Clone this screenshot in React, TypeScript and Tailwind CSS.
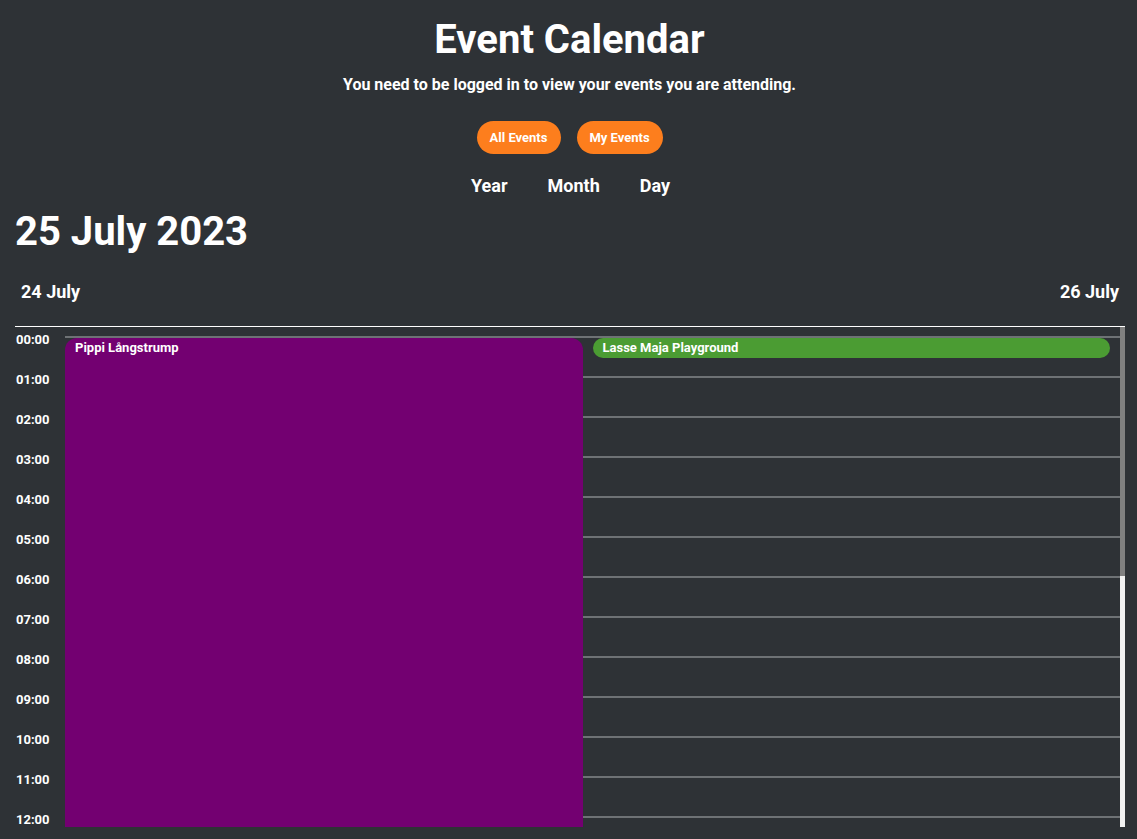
import React from "react";

// only the hours that are visible in the scroll window
const HOURS = Array.from({ length: 13 }, (_, i) => `${String(i).padStart(2, "0")}:00`);

interface CalEvent {
  title: string;
  column: number;
  top: number;
  height: number;
  color: string;
  rounded: string;
}

const EVENTS: CalEvent[] = [
  {
    title: "Pippi Långstrump",
    column: 0,
    top: 2,
    height: 520,
    color: "bg-[#730071]",
    rounded: "rounded-t-[12px]",
  },
  {
    title: "Lasse Maja Playground",
    column: 1,
    top: 2,
    height: 20,
    color: "bg-[#4b9c33]",
    rounded: "rounded-full",
  },
];

const App: React.FC = () => {
  return (
    <div className="min-h-[839px] w-full bg-[#2e3236] text-white font-['Roboto','Liberation_Sans',sans-serif] overflow-hidden">
      <h1 className="mt-4 pl-[2px] text-center text-[40px] leading-[48px] font-bold">Event Calendar</h1>
      <p className="mt-[11px] pl-[2px] text-center text-[16px] leading-5 font-bold">
        You need to be logged in to view your events you are attending.
      </p>

      <div className="mt-[26px] pl-[2px] flex justify-center gap-4">
        <button className="h-[33px] w-[84px] rounded-full bg-[#fd7e1d] text-[13px] font-bold text-white">
          All Events
        </button>
        <button className="h-[33px] w-[86px] rounded-full bg-[#fd7e1d] text-[13px] font-bold text-white">
          My Events
        </button>
      </div>

      <div className="mt-5 pl-[4px] flex justify-center gap-10 text-[18px] leading-6 font-bold">
        <span>Year</span>
        <span>Month</span>
        <span>Day</span>
      </div>

      <h2 className="mt-[10px] pl-[15px] text-[40px] leading-[48px] font-bold">25 July 2023</h2>

      <div className="ml-[15px] w-[1110px]">
        <div className="mt-6 flex justify-between px-[6px] text-[18px] leading-6 font-bold">
          <span>24 July</span>
          <span>26 July</span>
        </div>

        <div className="mt-[22px] border-t border-white flex h-[501px]">
          <div className="flex-1 h-[500px] overflow-hidden flex">
            {/* time labels */}
            <div className="w-[50px] shrink-0 pt-[5px] pl-px">
              {HOURS.map((h) => (
                <div key={h} className="h-10 text-[13px] leading-4 font-bold">
                  {h}
                </div>
              ))}
            </div>
            {/* day grid */}
            <div className="relative flex-1 pt-[9px]">
              {HOURS.map((h) => (
                <div key={h} className="h-10 border-t-2 border-[#6e7275]" />
              ))}
              {EVENTS.map((ev) => (
                <div
                  key={ev.title}
                  className={`absolute px-[10px] pt-[3px] text-[13px] leading-[14px] font-bold ${ev.color} ${ev.rounded}`}
                  style={{
                    left: `${ev.column * 50}%`,
                    width: "calc(50% - 10px)",
                    top: 9 + ev.top,
                    height: ev.height,
                  }}
                >
                  {ev.title}
                </div>
              ))}
            </div>
          </div>
          {/* scrollbar */}
          <div className="w-[5px] h-[500px] flex flex-col bg-[#f1f1f1]">
            <div className="h-[249px] bg-[#808080]" />
          </div>
        </div>
      </div>
    </div>
  );
};

export default App;
